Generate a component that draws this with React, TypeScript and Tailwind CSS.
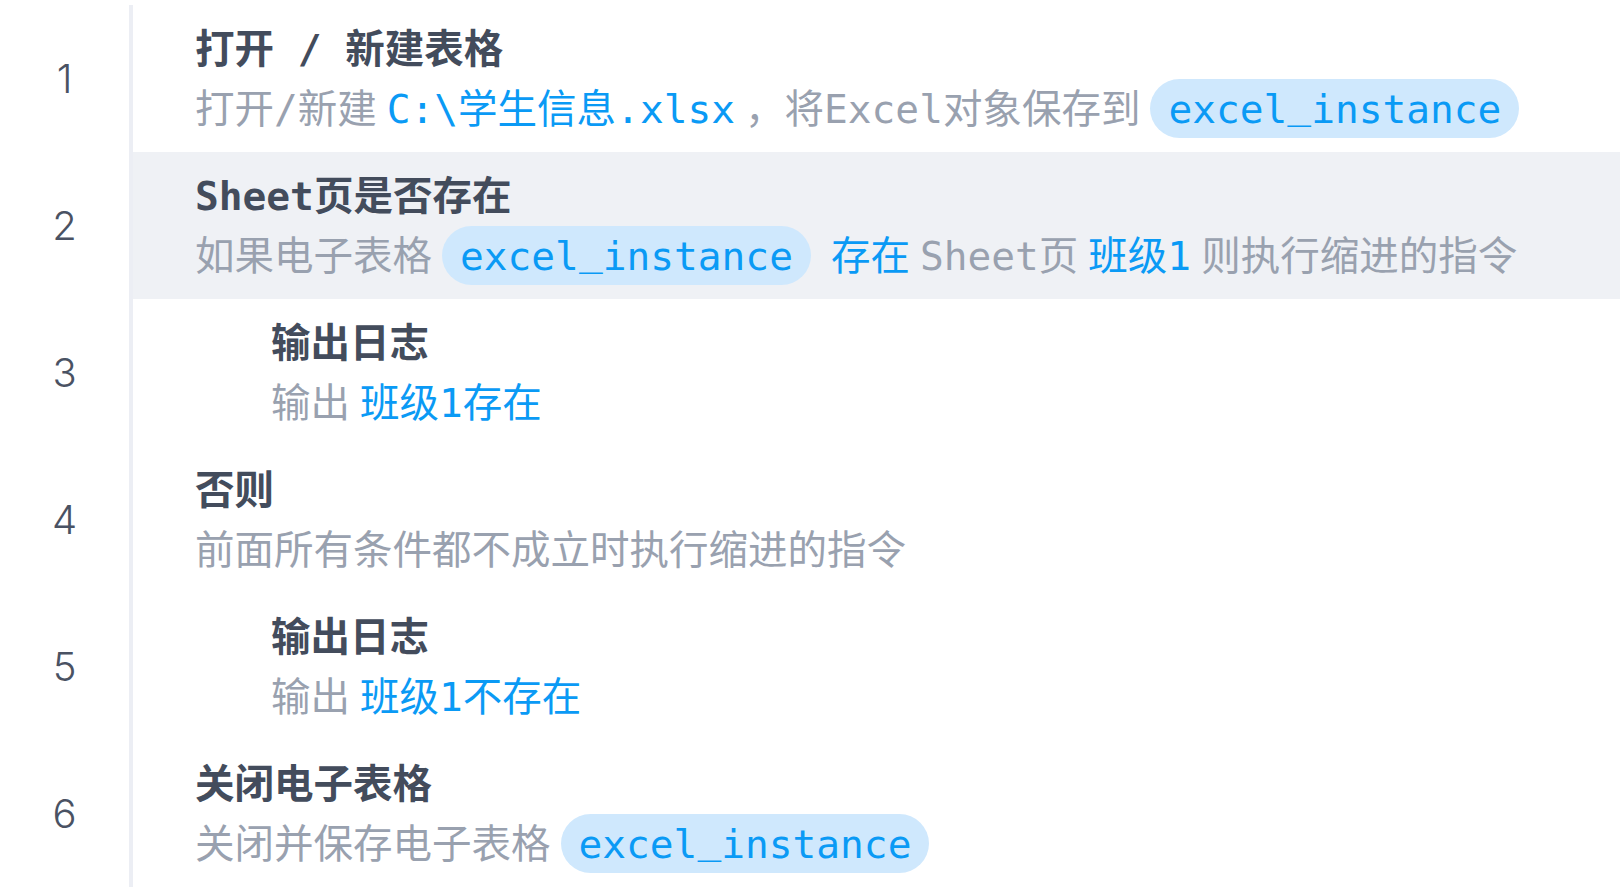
import type { ReactNode } from 'react'

type Part =
  | { kind: 'text'; text: string }
  | { kind: 'token'; text: string }
  | { kind: 'chip'; text: string }

interface Step {
  title: string
  parts: Part[]
  indent?: boolean
  active?: boolean
}

const t = (text: string): Part => ({ kind: 'text', text })
const tok = (text: string): Part => ({ kind: 'token', text })
const chip = (text: string): Part => ({ kind: 'chip', text })

const steps: Step[] = [
  {
    title: '打开 / 新建表格',
    parts: [t('打开/新建'), tok('C:\\学生信息.xlsx'), t('，将Excel对象保存到'), chip('excel_instance')],
  },
  {
    title: 'Sheet页是否存在',
    active: true,
    parts: [t('如果电子表格'), chip('excel_instance'), tok('存在'), t('Sheet页'), tok('班级1'), t('则执行缩进的指令')],
  },
  {
    title: '输出日志',
    indent: true,
    parts: [t('输出'), tok('班级1存在')],
  },
  {
    title: '否则',
    parts: [t('前面所有条件都不成立时执行缩进的指令')],
  },
  {
    title: '输出日志',
    indent: true,
    parts: [t('输出'), tok('班级1不存在')],
  },
  {
    title: '关闭电子表格',
    parts: [t('关闭并保存电子表格'), chip('excel_instance')],
  },
]

const monoStack = "font-['DejaVu_Sans_Mono','Noto_Sans_CJK_SC',monospace]"

// variable names: keep the underscore close to the baseline like the editor font does
function VarName({ name }: { name: string }) {
  const pieces = name.split('_')
  return (
    <>
      {pieces.map((p, i) => (
        <span key={i}>
          {i > 0 && <span className="relative -top-[5px]">_</span>}
          {p}
        </span>
      ))}
    </>
  )
}

function renderPart(part: Part, i: number): ReactNode {
  if (part.kind === 'token') {
    return (
      <span key={i} className="mx-[10px] text-[#0a9af5] whitespace-pre">
        {part.text}
      </span>
    )
  }
  if (part.kind === 'chip') {
    return (
      <span
        key={i}
        className="mx-[10px] inline-flex h-[59px] items-center rounded-full bg-[#cfe8fd] px-[18px] text-[#0a9af5]"
      >
        <VarName name={part.text} />
      </span>
    )
  }
  return (
    <span key={i} className="text-[#99a1af] whitespace-pre">
      {part.text}
    </span>
  )
}

function StepRow({ step, index }: { step: Step; index: number }) {
  return (
    <div className="flex h-[147px]">
      <div className="flex w-[129px] shrink-0 items-center justify-center font-['Inter',sans-serif] text-[40px] font-light text-[#4a5263]">
        {index + 1}
      </div>
      <div
        className={`flex flex-1 flex-col justify-center border-l-4 border-[#eceef4] ${
          step.active ? 'bg-[#eff1f5]' : 'bg-white'
        } ${step.indent ? 'pl-[138px]' : 'pl-[62px]'}`}
      >
        <div className={`${monoStack} h-[60px] text-[39.5px] leading-[60px] font-bold text-[#434c5c] whitespace-pre`}>
          {step.title}
        </div>
        <div className={`${monoStack} flex h-[60px] items-center text-[39.5px] leading-[60px] whitespace-nowrap`}>
          {step.parts.map(renderPart)}
        </div>
      </div>
    </div>
  )
}

export default function App() {
  return (
    <div className="h-[894px] w-[1620px] overflow-hidden bg-white pt-[5px]">
      {steps.map((step, i) => (
        <StepRow key={i} step={step} index={i} />
      ))}
    </div>
  )
}
